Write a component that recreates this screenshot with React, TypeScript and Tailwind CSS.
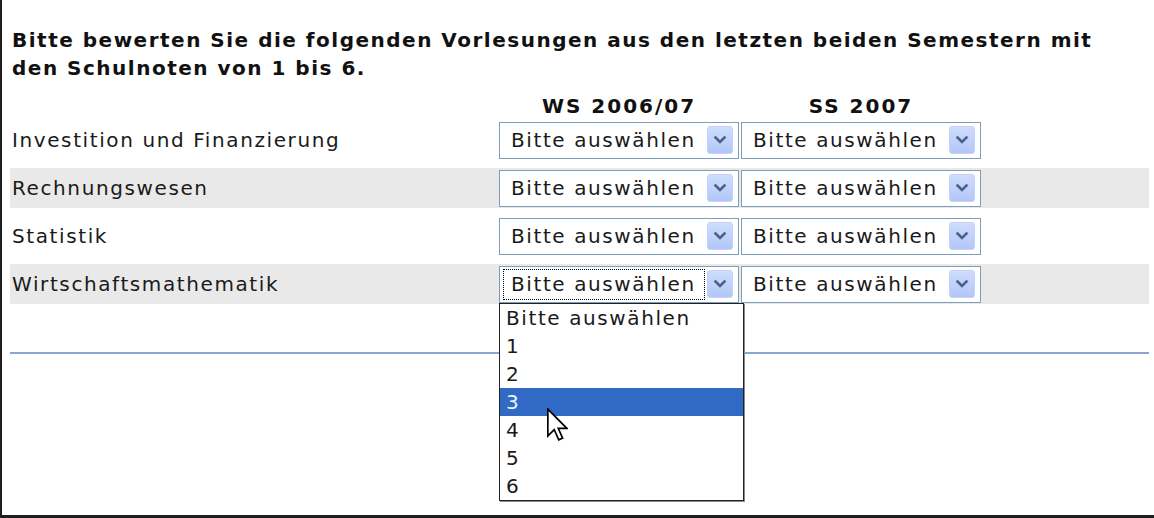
import React from "react";

function Chevron() {
  return (
    <svg width="14" height="10" viewBox="0 0 14 10">
      <path d="M2.5 2.5 L7 7 L11.5 2.5" fill="none" stroke="#4d6185" strokeWidth="2.6" strokeLinecap="square" />
    </svg>
  );
}

function Sel({ focused }: { focused?: boolean }) {
  return (
    <div className="h-[37px] w-[240px] border border-[#7f9db9] bg-white flex items-center pl-[3px] pr-[5px] gap-[2px]">
      <div
        className={
          focused
            ? "flex-1 h-[31px] flex items-center pl-[7px] border border-dotted border-black"
            : "flex-1 h-[31px] flex items-center pl-[7px] border border-transparent"
        }
      >
        Bitte auswählen
      </div>
      <div className="w-[26px] h-[28px] rounded-[3px] bg-gradient-to-b from-[#cfdcff] to-[#b2c7f7] border border-[#c2d3f8] flex items-center justify-center">
        <Chevron />
      </div>
    </div>
  );
}

function Cursor() {
  return (
    <svg width="21" height="34" viewBox="0 0 12.5 20" className="absolute left-[47px] top-[104px]">
      <path
        d="M0.5 0.5 L0.5 16.5 L4.3 12.8 L7 18.8 L9.3 17.8 L6.7 12 L11.8 12 Z"
        fill="#fff"
        stroke="#000"
        strokeWidth="1"
        strokeLinejoin="miter"
      />
    </svg>
  );
}

const rows = [
  { name: "Investition und Finanzierung", gray: false },
  { name: "Rechnungswesen", gray: true },
  { name: "Statistik", gray: false },
  { name: "Wirtschaftsmathematik", gray: true },
];

const options = ["Bitte auswählen", "1", "2", "3", "4", "5", "6"];

export default function App() {
  return (
    <div className="w-[1154px] h-[518px] bg-white border-l-[2px] border-b-[3px] border-[#1e1e1e] overflow-hidden font-['DejaVu_Sans',sans-serif] text-[20px] tracking-[1.6px] text-[#1a1a1a] pl-[8px] pr-[5px]">
      <div className="pt-[26px] pl-[2px] font-bold leading-[28px] tracking-[1.5px] text-[#111]">
        Bitte bewerten Sie die folgenden Vorlesungen aus den letzten beiden Semestern mit
        <br />
        den Schulnoten von 1 bis 6.
      </div>
      <div className="flex mt-[12px] h-[24px] items-center font-bold tracking-[2px] text-[#111]">
        <div className="w-[489px]" />
        <div className="w-[240px] text-center">WS 2006/07</div>
        <div className="w-[2px]" />
        <div className="w-[240px] text-center">SS 2007</div>
      </div>
      <div className="flex flex-col gap-[8px] mt-[2px]">
        {rows.map((r, i) => (
          <div
            key={r.name}
            className={
              r.gray
                ? "flex h-[40px] items-center bg-[#e9e9e9]"
                : "flex h-[40px] items-center"
            }
          >
            <div className="w-[489px] pl-[2px]">{r.name}</div>
            <div className="relative">
              <Sel focused={i === 3} />
              {i === 3 && (
                <div className="absolute left-0 top-[37px] w-[245px] bg-white border border-[#222] shadow-[1px_1px_0_#8a8a8a] z-10">
                  {options.map((o) => (
                    <div
                      key={o}
                      className={
                        o === "3"
                          ? "h-[28px] flex items-center pl-[6px] bg-[#316ac5] text-[#eef3ff]"
                          : "h-[28px] flex items-center pl-[6px]"
                      }
                    >
                      {o}
                    </div>
                  ))}
                  <Cursor />
                </div>
              )}
            </div>
            <div className="w-[2px]" />
            <Sel />
          </div>
        ))}
      </div>
      <div className="mt-[48px] h-[2px] bg-[#8aa6d0]" />
    </div>
  );
}
